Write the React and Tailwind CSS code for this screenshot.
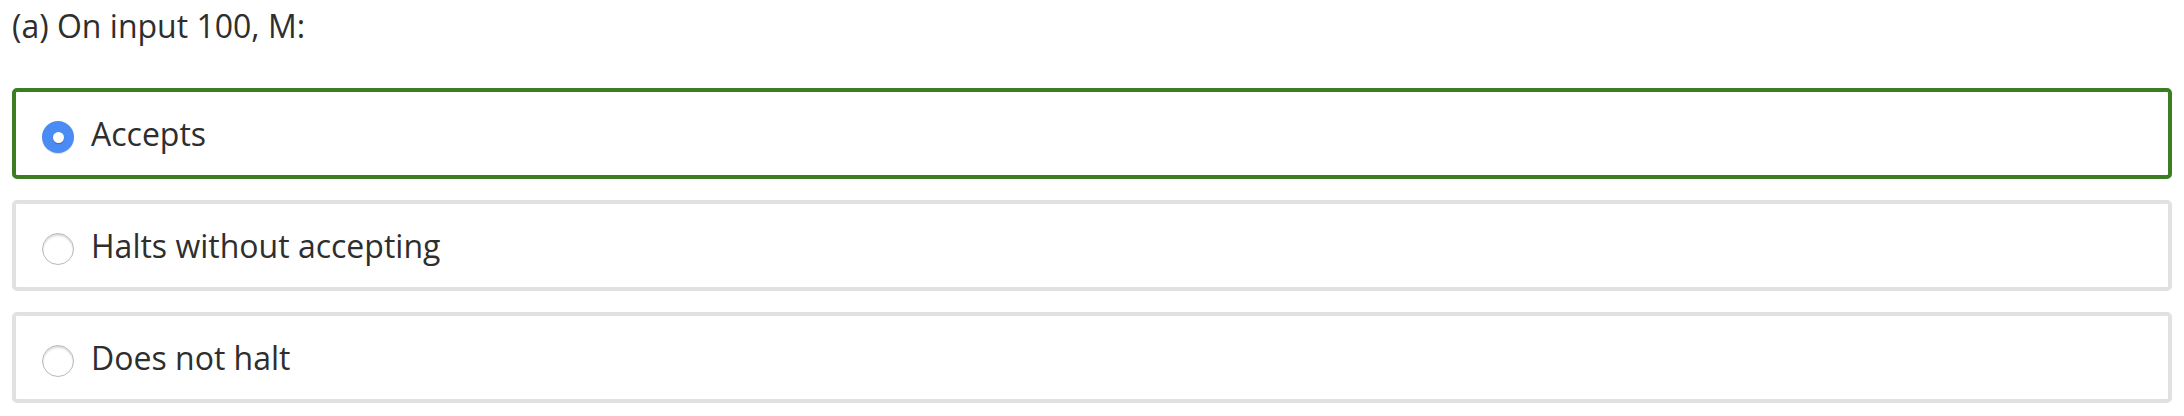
import React from "react";

const options = [
  { label: "Accepts", selected: true },
  { label: "Halts without accepting", selected: false },
  { label: "Does not halt", selected: false },
];

function Radio({ selected }) {
  if (selected) {
    return (
      <span className="mt-[7px] ml-[26px] flex h-[32px] w-[32px] shrink-0 items-center justify-center rounded-full bg-[#4b8bf4] shadow-[0_1px_1px_rgba(0,0,0,0.15)]">
        <span className="h-[11px] w-[11px] rounded-full bg-white shadow-[0_1px_1px_rgba(0,0,0,0.25)]" />
      </span>
    );
  }
  return (
    <span className="mt-[7px] ml-[26px] h-[32px] w-[32px] shrink-0 rounded-full border-[1.5px] border-[#b9b9b9] bg-white shadow-[inset_0_2px_2px_rgba(0,0,0,0.14)]" />
  );
}

export default function App() {
  return (
    <div
      className="min-h-[416px] w-full bg-white px-[12px] pt-[4px] text-[#2e2e2e]"
      style={{ fontFamily: '"Open Sans", "Noto Sans", sans-serif' }}
    >
      <div className="text-[32px] leading-[44px]">(a) On input 100, M:</div>
      <div className="mt-[40px] flex flex-col gap-[21px]">
        {options.map((o) => (
          <div
            key={o.label}
            className={
              o.selected
                ? "flex h-[91px] items-center rounded-[5px] border-4 border-[#3b7d23]"
                : "flex h-[91px] items-center rounded-[5px] border-4 border-[#e1e1e1]"
            }
          >
            <Radio selected={o.selected} />
            <span className="ml-[17px] text-[32px] leading-[44px]">{o.label}</span>
          </div>
        ))}
      </div>
    </div>
  );
}
